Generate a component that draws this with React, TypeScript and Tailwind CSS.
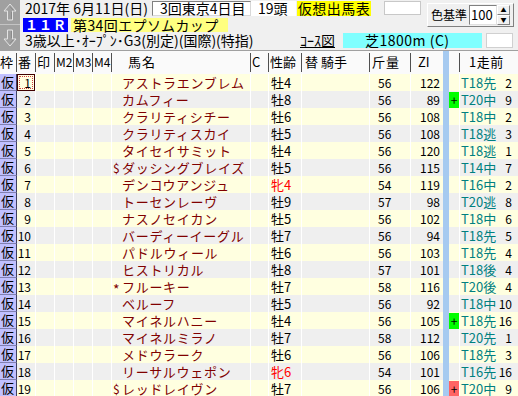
import React from "react";

type Row = {
  no: number;
  pre?: string;
  name: string;
  sa: string;
  hin?: boolean;
  kin: number;
  zi: number;
  mark?: "g" | "r";
  last: string;
  pos: number;
};

const ROWS: Row[] = [
  { no: 1, name: "アストラエンブレム", sa: "牡4", kin: 56, zi: 122, last: "T18先", pos: 2 },
  { no: 2, name: "カムフィー", sa: "牡8", kin: 56, zi: 89, mark: "g", last: "T20中", pos: 9 },
  { no: 3, name: "クラリティシチー", sa: "牡6", kin: 56, zi: 108, last: "T18中", pos: 2 },
  { no: 4, name: "クラリティスカイ", sa: "牡5", kin: 56, zi: 108, last: "T18逃", pos: 3 },
  { no: 5, name: "タイセイサミット", sa: "牡4", kin: 56, zi: 120, last: "T18逃", pos: 1 },
  { no: 6, pre: "$", name: "ダッシングブレイズ", sa: "牡5", kin: 56, zi: 115, last: "T14中", pos: 7 },
  { no: 7, name: "デンコウアンジュ", sa: "牝4", hin: true, kin: 54, zi: 119, last: "T16中", pos: 2 },
  { no: 8, name: "トーセンレーヴ", sa: "牡9", kin: 57, zi: 98, last: "T20逃", pos: 8 },
  { no: 9, name: "ナスノセイカン", sa: "牡5", kin: 56, zi: 102, last: "T18中", pos: 6 },
  { no: 10, name: "バーディーイーグル", sa: "牡7", kin: 56, zi: 94, last: "T18先", pos: 5 },
  { no: 11, name: "パドルウィール", sa: "牡6", kin: 56, zi: 103, last: "T18先", pos: 4 },
  { no: 12, name: "ヒストリカル", sa: "牡8", kin: 57, zi: 101, last: "T18後", pos: 4 },
  { no: 13, pre: "*", name: "フルーキー", sa: "牡7", kin: 58, zi: 116, last: "T20後", pos: 4 },
  { no: 14, name: "ベルーフ", sa: "牡5", kin: 56, zi: 92, last: "T18中", pos: 10 },
  { no: 15, name: "マイネルハニー", sa: "牡4", kin: 56, zi: 105, mark: "g", last: "T18先", pos: 16 },
  { no: 16, name: "マイネルミラノ", sa: "牡7", kin: 58, zi: 112, last: "T20先", pos: 1 },
  { no: 17, name: "メドウラーク", sa: "牡6", kin: 56, zi: 106, last: "T18先", pos: 3 },
  { no: 18, name: "リーサルウェポン", sa: "牝6", hin: true, kin: 54, zi: 101, last: "T16先", pos: 16 },
  { no: 19, pre: "$", name: "レッドレイヴン", sa: "牡7", kin: 56, zi: 106, mark: "r", last: "T20中", pos: 9 },
];

function UpArrow() {
  return (
    <svg width="14" height="18" viewBox="0 0 14 18">
      <path d="M7 1 L13 8 L9.5 8 L9.5 17 L4.5 17 L4.5 8 L1 8 Z" fill="none" stroke="#e4e4e4" strokeWidth="1" />
      <path d="M7 3.5 L10.5 7.5 M8.5 9 L8.5 16" stroke="#8a8a8a" strokeWidth="1" />
    </svg>
  );
}

function DownArrow() {
  return (
    <svg width="14" height="18" viewBox="0 0 14 18">
      <path d="M7 17 L13 10 L9.5 10 L9.5 1 L4.5 1 L4.5 10 L1 10 Z" fill="none" stroke="#e4e4e4" strokeWidth="1" />
      <path d="M8.5 2 L8.5 9 M10.5 10.5 L7 14.5" stroke="#8a8a8a" strokeWidth="1" />
    </svg>
  );
}

export default function App() {
  return (
    <div className="relative h-[396px] w-[518px] overflow-hidden whitespace-nowrap bg-[#f0f0f0] font-['Noto_Sans_CJK_JP',sans-serif] text-black">
      {/* top info area */}
      <div className="flex h-[50px]">
        <div className="flex w-[20px] shrink-0 flex-col bg-[#a0a0a0]">
          <div className="flex h-[25px] items-center justify-center border-b border-[#c4c4c4]">
            <UpArrow />
          </div>
          <div className="flex flex-1 items-center justify-center">
            <DownArrow />
          </div>
        </div>

        <div className="flex flex-1 flex-col">
          <div className="flex items-start">
            <div className="flex flex-col">
              <div className="flex h-[17px] items-start pt-[1px] text-[14px] leading-[15px]">
                <span className="w-[132px] shrink-0 pl-[5px]">2017年 6月11日(日)</span>
                <div className="h-[15px] w-[99px] shrink-0 border border-[#808080] border-b-[#d8d8d8] border-r-[#d8d8d8] bg-white pl-[7px] leading-[13px]">3回東京4日目</div>
                <div className="h-[15px] w-[45px] shrink-0 bg-white pl-[7px]">19頭</div>
                <div className="ml-[1px] h-[15px] w-[74px] shrink-0 bg-[#ffff00] text-center tracking-[0.5px]">仮想出馬表</div>
                <div className="ml-[13px] h-[14px] w-[37px] shrink-0 border border-[#c8c8c8] bg-white"></div>
              </div>
              <div className="flex h-[15px] items-start pt-[1px]">
                <div className="ml-[3px] h-[14px] w-[45px] shrink-0 bg-[#0000ff] pl-[2px] text-[13px] font-bold leading-[14px] tracking-[1px] text-white">１１Ｒ</div>
                <div className="ml-[3px] h-[14px] w-[157px] shrink-0 bg-[#ffff80] pl-[2px] text-[14px] leading-[14px] tracking-[0.4px]">第34回エプソムカップ</div>
              </div>
            </div>
            <div className="ml-[6px] mt-[3px] flex h-[24px] w-[87px] shrink-0 items-center border border-[#ffffff] border-b-[#808080] border-r-[#808080] bg-[#f0f0f0] pl-[3px]">
              <span className="w-[38px] shrink-0 text-[12px] leading-[14px]">色基準</span>
              <div className="flex h-[20px] w-[28px] shrink-0 items-center border border-[#808080] border-b-[#e0e0e0] border-r-[#e0e0e0] bg-white pl-[1px] text-[13px] leading-[14px]">100</div>
              <div className="flex h-[20px] w-[13px] shrink-0 flex-col">
                <div className="flex h-[10px] items-center justify-center border border-[#fff] border-b-[#808080] border-r-[#808080] text-[6px] leading-none">▲</div>
                <div className="flex h-[10px] items-center justify-center border border-[#fff] border-b-[#808080] border-r-[#808080] text-[6px] leading-none">▼</div>
              </div>
            </div>
          </div>
          <div className="flex h-[16px] items-start pt-[1px] text-[14px] leading-[15px]">
            <span className="w-[280px] shrink-0 pl-[5px]">3歳以上･ｵｰﾌﾟﾝ･G3(別定)(国際)(特指)</span>
            <span className="w-[43px] shrink-0 underline">ｺｰｽ図</span>
            <div className="h-[15px] w-[139px] shrink-0 bg-[#80ffff] pl-[22px] tracking-[0.5px]">芝1800m (C)</div>
            <div className="ml-[4px] h-[15px] w-[27px] shrink-0 border border-[#d0d0d0] bg-white"></div>
          </div>
        </div>
      </div>
      <div className="h-px bg-[#a0a0a0]"></div>

      {/* header */}
      <div className="flex h-[23px] items-end bg-[#fafafa] pb-[2px] text-[13px] leading-[17px]">
        <div className="h-[19px] w-[17px] shrink-0 border-r border-[#505050]">枠</div>
        <div className="h-[19px] w-[19px] shrink-0 border-r border-[#505050] pl-[1px]">番</div>
        <div className="h-[19px] w-[19px] shrink-0 border-r border-[#505050] pl-[1px]">印</div>
        <div className="h-[19px] w-[19px] shrink-0 border-r border-[#505050] pl-[1px] text-[12px]">M2</div>
        <div className="h-[19px] w-[19px] shrink-0 border-r border-[#505050] pl-[1px] text-[12px]">M3</div>
        <div className="h-[19px] w-[19px] shrink-0 border-r border-[#505050] pl-[1px] text-[12px]">M4</div>
        <div className="h-[19px] w-[139px] shrink-0 border-r border-[#505050] pl-[16px] tracking-[1px]">馬名</div>
        <div className="h-[19px] w-[18px] shrink-0 border-r border-[#505050] pl-[1px]">C</div>
        <div className="h-[19px] w-[33px] shrink-0 border-r border-[#505050] pl-[1px]">性齢</div>
        <div className="h-[19px] w-[68px] shrink-0 border-r border-[#505050] pl-[3px]">替 騎手</div>
        <div className="h-[19px] w-[41px] shrink-0 border-r border-[#505050] pl-[2px] tracking-[1px]">斤量</div>
        <div className="h-[19px] w-[32px] shrink-0 pl-[7px]">ZI</div>
        <div className="-mb-[2px] h-[23px] w-[6px] shrink-0 bg-[#a6caf0]"></div>
        <div className="h-[19px] w-[11px] shrink-0 border-r border-[#505050]"></div>
        <div className="h-[19px] w-[58px] shrink-0 pl-[9px] tracking-[0.5px]">1走前</div>
      </div>

      {/* rows */}
      {ROWS.map((r) => {
        const bg = r.no % 2 === 1 ? "bg-[#ffffe0]" : "bg-[#efefef]";
        return (
          <div key={r.no} className={`flex h-[17px] text-[12px] leading-[17px] ${bg}`}>
            <div className="h-[17px] w-[17px] shrink-0 border-b border-r border-[#404060] border-b-[#8080b0] bg-[#c0c0ff] pl-[1px] text-[13px] leading-[16px]">仮</div>
            <div className="relative h-[17px] w-[19px] shrink-0 border-r border-white pr-[4px] text-right">
              {r.no === 1 && (
                <div className="absolute inset-0 border border-[#400000]">
                  <div className="absolute inset-[1px] border border-dotted border-[#d04040]"></div>
                </div>
              )}
              <span className="relative">{r.no}</span>
            </div>
            <div className="h-[17px] w-[19px] shrink-0 border-r border-white"></div>
            <div className="h-[17px] w-[19px] shrink-0 border-r border-white"></div>
            <div className="h-[17px] w-[19px] shrink-0 border-r border-white"></div>
            <div className="h-[17px] w-[19px] shrink-0 border-r border-white"></div>
            <div className="flex h-[17px] w-[139px] shrink-0 border-r border-white text-[13px] text-[#800000]">
              <span className="w-[10px] shrink-0 pl-[1px] text-[12px]">
                <span className={r.pre === "*" ? "relative top-[3px] text-[14px]" : ""}>{r.pre}</span>
              </span>
              <span className="tracking-[0.7px]">{r.name}</span>
            </div>
            <div className="h-[17px] w-[18px] shrink-0 border-r border-white"></div>
            <div className={`h-[17px] w-[33px] shrink-0 border-r border-white pl-[2px] text-[13px] ${r.hin ? "text-[#ff0000]" : ""}`}>{r.sa}</div>
            <div className="h-[17px] w-[68px] shrink-0 border-r border-white"></div>
            <div className="h-[17px] w-[41px] shrink-0 border-r border-white pl-[8px]">{r.kin}</div>
            <div className="h-[17px] w-[32px] shrink-0 pr-[3px] text-right">{r.zi}</div>
            <div className="h-[17px] w-[6px] shrink-0 bg-[#a6caf0]"></div>
            <div className="flex h-[17px] w-[11px] shrink-0 items-center justify-center border-r border-white">
              {r.mark && (
                <div className={`flex h-[16px] w-[11px] items-center justify-center leading-none ${r.mark === "g" ? "bg-[#00ff00]" : "bg-[#ff6464]"}`}>+</div>
              )}
            </div>
            <div className="flex h-[17px] w-[58px] shrink-0 justify-between pl-[1px] pr-[6px]">
              <span className="text-[13px] text-[#008080]">{r.last}</span>
              <span>{r.pos}</span>
            </div>
          </div>
        );
      })}
    </div>
  );
}
